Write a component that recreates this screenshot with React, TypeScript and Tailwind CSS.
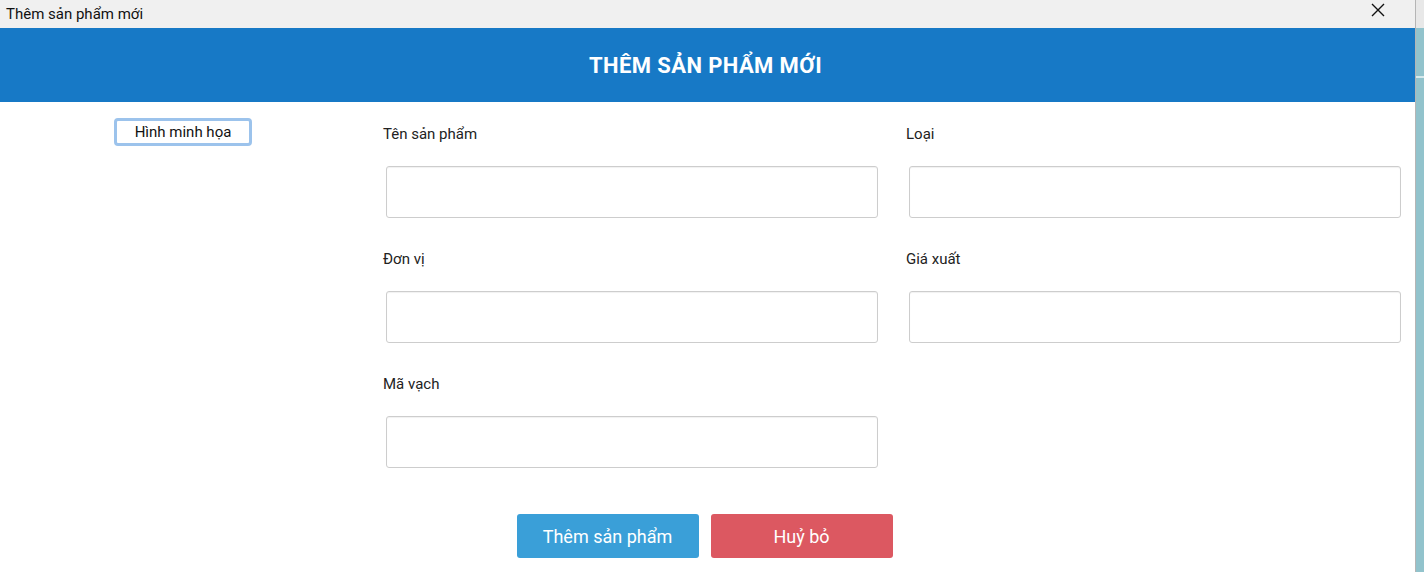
import React from "react";

const fields = [
  { label: "Tên sản phẩm" },
  { label: "Loại" },
  { label: "Đơn vị" },
  { label: "Giá xuất" },
  { label: "Mã vạch" },
];

function Field({ label }: { label: string }) {
  return (
    <div className="pt-[22px] pb-[9px]">
      <div className="h-5 text-[15px] leading-5 text-[#222]">{label}</div>
      <input
        type="text"
        className="mt-[22px] ml-[3px] block h-[52px] w-[492px] rounded-[3px] border border-[#cdcdcd] bg-white shadow-[inset_0_1px_1px_rgba(0,0,0,0.06)] outline-none"
      />
    </div>
  );
}

export default function App() {
  return (
    <div className="flex h-[572px] w-[1424px] overflow-hidden bg-white font-['Roboto',sans-serif]">
      <div className="flex w-[1415px] shrink-0 flex-col">
        {/* window title bar */}
        <div className="flex h-[28px] items-center justify-between bg-[#f0f0f0] pl-[6px] pr-[30px]">
          <span className="text-[15px] text-[#111]">Thêm sản phẩm mới</span>
          <svg width="14" height="14" viewBox="0 0 14 14" className="mb-[8px]">
            <path d="M1 1L13 13M13 1L1 13" stroke="#111" strokeWidth="1.4" />
          </svg>
        </div>

        <div className="flex h-[74px] items-center justify-center bg-[#1779c6] pr-[4px]">
          <h1 className="text-[22px] font-bold tracking-[0.4px] text-white">THÊM SẢN PHẨM MỚI</h1>
        </div>

        <div className="flex flex-1">
          <div className="w-[383px] shrink-0 pl-[114px] pt-[16px]">
            <button className="h-[28px] w-[138px] rounded-[4px] border-[3px] border-[#9cc3ec] bg-white text-[15px] text-[#111]">
              Hình minh họa
            </button>
          </div>
          <div className="grid shrink-0 grid-cols-[523px_509px] content-start">
            {fields.map((f) => (
              <Field key={f.label} label={f.label} />
            ))}
          </div>
        </div>

        <div className="flex justify-center gap-3 pb-[14px] pr-[6px]">
          <button className="h-[44px] w-[182px] rounded-[3px] bg-[#3a9fd8] text-[18px] text-white">
            Thêm sản phẩm
          </button>
          <button className="h-[44px] w-[182px] rounded-[3px] bg-[#dc5861] text-[18px] text-white">
            Huỷ bỏ
          </button>
        </div>
      </div>

      {/* right strip */}
      <div className="flex flex-1 flex-col border-l border-[#b5b5b5]">
        <div className="h-[28px] bg-[#e8e8e8]" />
        <div className="h-[48px] bg-[#92c3cc]" />
        <div className="h-[2px] bg-[#d6e9ec]" />
        <div className="flex-1 bg-[#92c3cc]" />
      </div>
    </div>
  );
}
